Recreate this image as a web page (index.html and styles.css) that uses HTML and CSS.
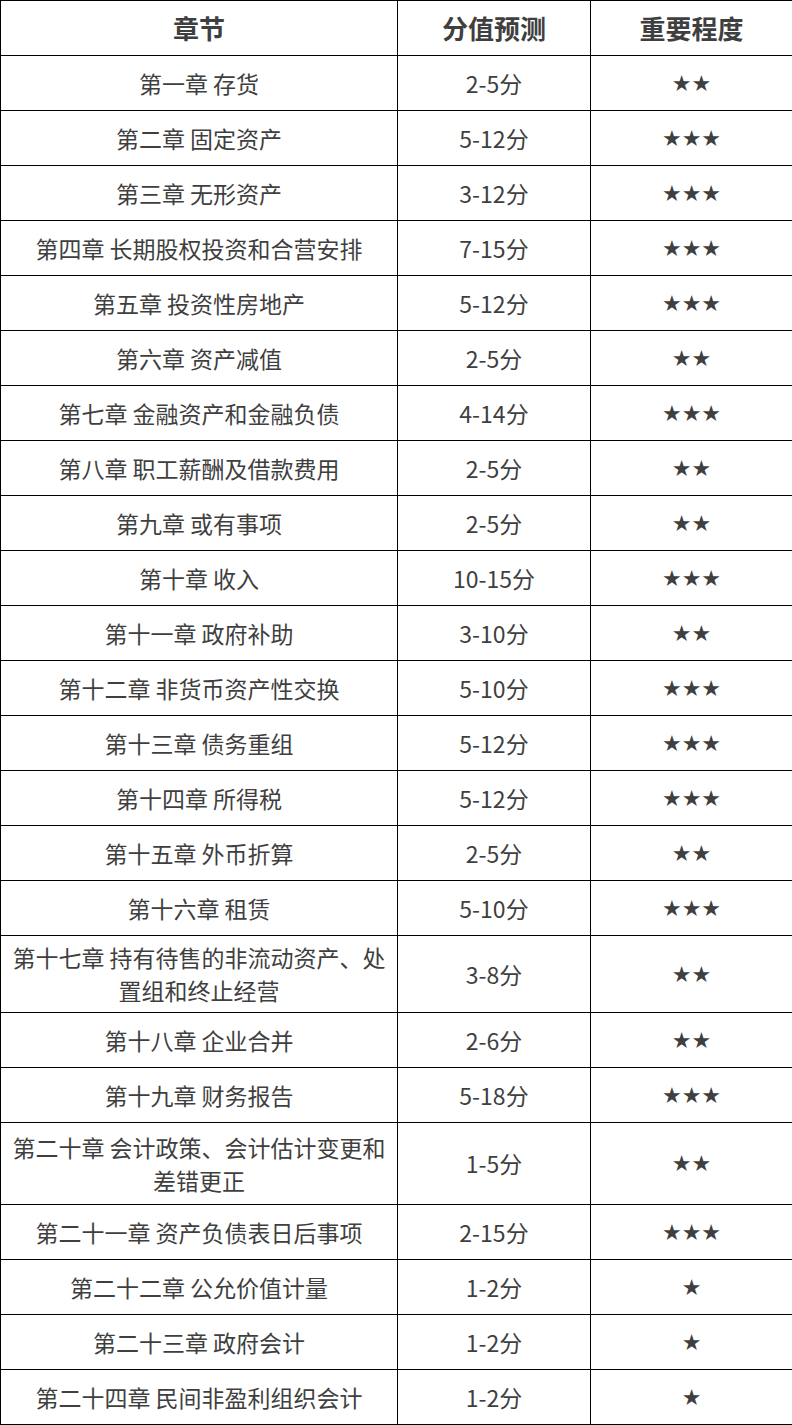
FILE: index.html
```html
<!DOCTYPE html>
<html lang="zh-CN">
<head>
<meta charset="utf-8">
<title>章节分值预测</title>
<link rel="stylesheet" href="styles.css">
</head>
<body>
<table class="score-table">
  <colgroup>
    <col class="col-chapter">
    <col class="col-score">
    <col class="col-level">
  </colgroup>
  <thead>
    <tr><th>章节</th><th>分值预测</th><th>重要程度</th></tr>
  </thead>
  <tbody>
    <tr><td>第一章 存货</td><td>2-5分</td><td class="stars">★★</td></tr>
    <tr><td>第二章 固定资产</td><td>5-12分</td><td class="stars">★★★</td></tr>
    <tr><td>第三章 无形资产</td><td>3-12分</td><td class="stars">★★★</td></tr>
    <tr><td>第四章 长期股权投资和合营安排</td><td>7-15分</td><td class="stars">★★★</td></tr>
    <tr><td>第五章 投资性房地产</td><td>5-12分</td><td class="stars">★★★</td></tr>
    <tr><td>第六章 资产减值</td><td>2-5分</td><td class="stars">★★</td></tr>
    <tr><td>第七章 金融资产和金融负债</td><td>4-14分</td><td class="stars">★★★</td></tr>
    <tr><td>第八章 职工薪酬及借款费用</td><td>2-5分</td><td class="stars">★★</td></tr>
    <tr><td>第九章 或有事项</td><td>2-5分</td><td class="stars">★★</td></tr>
    <tr><td>第十章 收入</td><td>10-15分</td><td class="stars">★★★</td></tr>
    <tr><td>第十一章 政府补助</td><td>3-10分</td><td class="stars">★★</td></tr>
    <tr><td>第十二章 非货币资产性交换</td><td>5-10分</td><td class="stars">★★★</td></tr>
    <tr><td>第十三章 债务重组</td><td>5-12分</td><td class="stars">★★★</td></tr>
    <tr><td>第十四章 所得税</td><td>5-12分</td><td class="stars">★★★</td></tr>
    <tr><td>第十五章 外币折算</td><td>2-5分</td><td class="stars">★★</td></tr>
    <tr><td>第十六章 租赁</td><td>5-10分</td><td class="stars">★★★</td></tr>
    <tr><td>第十七章 持有待售的非流动资产、处置组和终止经营</td><td>3-8分</td><td class="stars">★★</td></tr>
    <tr><td>第十八章 企业合并</td><td>2-6分</td><td class="stars">★★</td></tr>
    <tr><td>第十九章 财务报告</td><td>5-18分</td><td class="stars">★★★</td></tr>
    <tr class="row-tall"><td>第二十章 会计政策、会计估计变更和差错更正</td><td>1-5分</td><td class="stars">★★</td></tr>
    <tr><td>第二十一章 资产负债表日后事项</td><td>2-15分</td><td class="stars">★★★</td></tr>
    <tr><td>第二十二章 公允价值计量</td><td>1-2分</td><td class="stars">★</td></tr>
    <tr><td>第二十三章 政府会计</td><td>1-2分</td><td class="stars">★</td></tr>
    <tr><td>第二十四章 民间非盈利组织会计</td><td>1-2分</td><td class="stars">★</td></tr>
  </tbody>
</table>
</body>
</html>
```
FILE: styles.css
```css
html, body {
  margin: 0;
  padding: 0;
  background: #ffffff;
}

.score-table {
  width: 792px;
  border-collapse: collapse;
  table-layout: fixed;
  font-family: "Noto Sans CJK SC", "Noto Sans", sans-serif;
  color: #3f3f3f;
}

.col-chapter { width: 397px; }
.col-score { width: 193px; }
.col-level { width: 202px; }

.score-table th,
.score-table td {
  border: 1px solid #000000;
  text-align: center;
  vertical-align: middle;
  padding: 5px 8px;
  box-sizing: border-box;
}

.score-table th {
  height: 55px;
  font-size: 26px;
  font-weight: 700;
  line-height: 34px;
}

.score-table td {
  height: 55px;
  font-size: 23px;
  font-weight: 400;
  line-height: 33px;
}

.score-table td.stars {
  font-family: "DejaVu Sans", sans-serif;
  font-size: 22px;
  letter-spacing: 0;
}

.score-table tr.row-tall td {
  height: 82px;
}
```
